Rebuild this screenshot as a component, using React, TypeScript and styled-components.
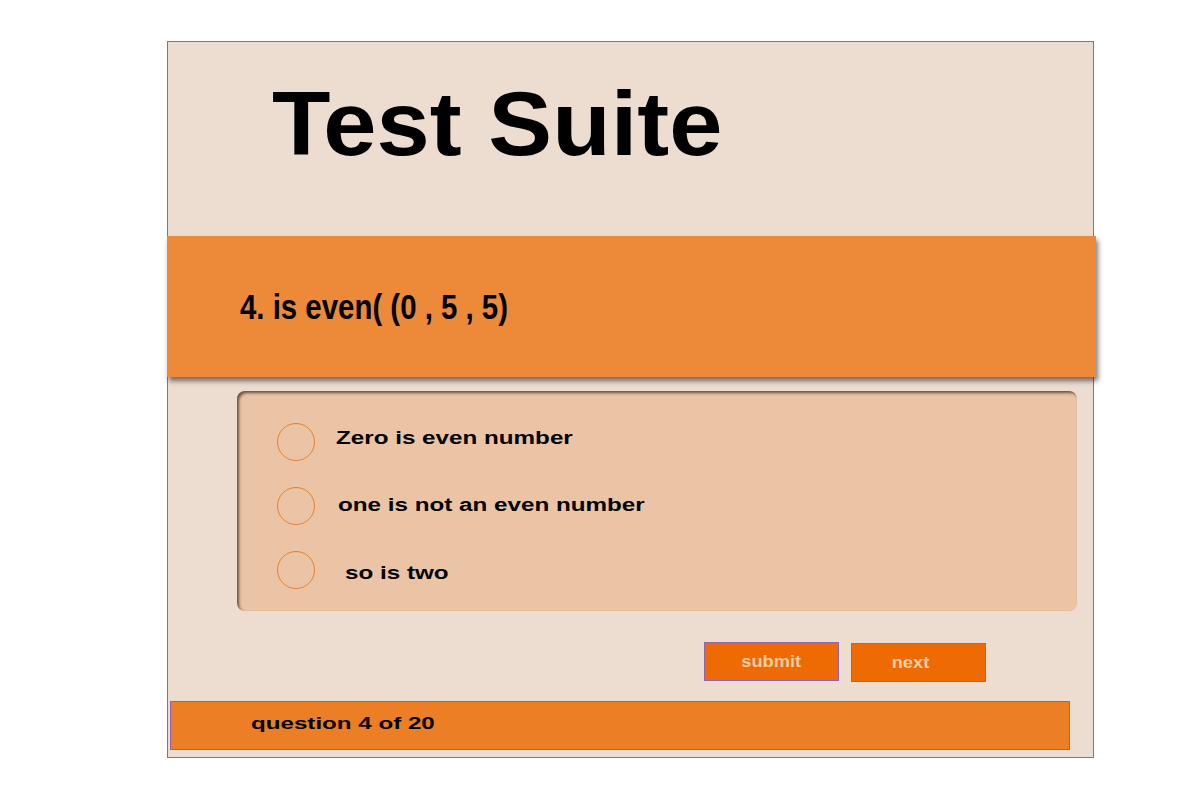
import React from 'react'
import styled, { createGlobalStyle } from 'styled-components'

const GlobalStyle = createGlobalStyle`
  html, body {
    margin: 0;
    padding: 0;
    background: #ffffff;
  }
  body {
    font-family: "Liberation Sans", Arial, sans-serif;
  }
`

const Page = styled.div`
  padding: 41px 0 0 167px;
`

const Frame = styled.div`
  box-sizing: border-box;
  width: 927px;
  height: 717px;
  border: 1px solid #8f62b2;
  background: #eddcd0;
  display: flex;
  flex-direction: column;
`

const Header = styled.div`
  height: 194px;
  padding-left: 104px;
  display: flex;
  align-items: flex-start;
`

const Title = styled.h1`
  margin: 32px 0 0;
  font-size: 91px;
  font-weight: bold;
  line-height: 1.1;
  color: #000;
  transform: scaleX(1.052);
  transform-origin: left center;
`

const QuestionBanner = styled.div`
  height: 141px;
  margin-right: -3px;
  margin-left: -1px;
  background: #ed8a3a;
  box-shadow: 2px 4px 5px rgba(40, 30, 20, 0.6);
  display: flex;
  align-items: center;
  padding-left: 73px;
`

const QuestionText = styled.h2`
  margin: 0;
  font-size: 35px;
  font-weight: bold;
  color: #000;
  transform: scaleX(0.84);
  transform-origin: left center;
  white-space: pre;
`

const OptionsBox = styled.div`
  margin: 14px 0 0 69px;
  width: 840px;
  height: 220px;
  box-sizing: border-box;
  border-radius: 8px;
  background: #ebc3a5;
  box-shadow: inset 2px 2px 3px rgba(60, 40, 30, 0.75);
  padding: 32px 0 0 40px;
  display: flex;
  flex-direction: column;
  gap: 26px;
`

const OptionRow = styled.label`
  display: flex;
  align-items: center;
  height: 38px;
  cursor: pointer;
`

const Radio = styled.span`
  box-sizing: border-box;
  width: 38px;
  height: 38px;
  border-radius: 50%;
  border: 1px solid #e8822f;
  flex-shrink: 0;
`

const OptionText = styled.span<{ $indent: number; $shift: number }>`
  display: inline-block;
  margin-left: ${p => p.$indent}px;
  position: relative;
  top: ${p => p.$shift}px;
  font-size: 18px;
  font-weight: bold;
  color: #000;
  white-space: pre;
  transform: scaleX(1.345);
  transform-origin: left center;
`

const ButtonRow = styled.div`
  display: flex;
  gap: 12px;
  margin: 31px 0 0 536px;
  align-items: flex-start;
`

const ActionButton = styled.button<{ $drop?: boolean; $padRight?: number }>`
  box-sizing: border-box;
  width: 135px;
  height: 39px;
  margin-top: ${p => (p.$drop ? 1 : 0)}px;
  padding: 0 ${p => p.$padRight ?? 0}px 0 0;
  border: 1px solid #8f62b2;
  background: #ee6b03;
  color: #f2cba8;
  font-family: "Liberation Sans", Arial, sans-serif;
  font-size: 16px;
  font-weight: bold;
  cursor: pointer;
`

const ButtonLabel = styled.span`
  display: inline-block;
  transform: scaleX(1.14);
`

const Footer = styled.div`
  box-sizing: border-box;
  margin: 19px 0 0 2px;
  width: 900px;
  height: 49px;
  border: 1px solid #8f62b2;
  background: #ec7e25;
  display: flex;
  align-items: center;
  padding: 0 0 4px 80px;
`

const FooterText = styled.span`
  display: inline-block;
  font-size: 17px;
  font-weight: bold;
  color: #000;
  transform: scaleX(1.42);
  transform-origin: left center;
`

const options = [
  { text: 'Zero is even number', indent: 21, shift: -4 },
  { text: 'one is not an even number', indent: 23, shift: -1 },
  { text: 'so is two', indent: 30, shift: 3 },
]

export default function App() {
  return (
    <>
      <GlobalStyle />
      <Page>
        <Frame>
          <Header>
            <Title>Test Suite</Title>
          </Header>
          <QuestionBanner>
            <QuestionText>4. is even( (0 , 5 , 5)</QuestionText>
          </QuestionBanner>
          <OptionsBox>
            {options.map(o => (
              <OptionRow key={o.text}>
                <Radio />
                <OptionText $indent={o.indent} $shift={o.shift}>{o.text}</OptionText>
              </OptionRow>
            ))}
          </OptionsBox>
          <ButtonRow>
            <ActionButton><ButtonLabel>submit</ButtonLabel></ActionButton>
            <ActionButton $drop $padRight={16}><ButtonLabel>next</ButtonLabel></ActionButton>
          </ButtonRow>
          <Footer>
            <FooterText>question 4 of 20</FooterText>
          </Footer>
        </Frame>
      </Page>
    </>
  )
}
